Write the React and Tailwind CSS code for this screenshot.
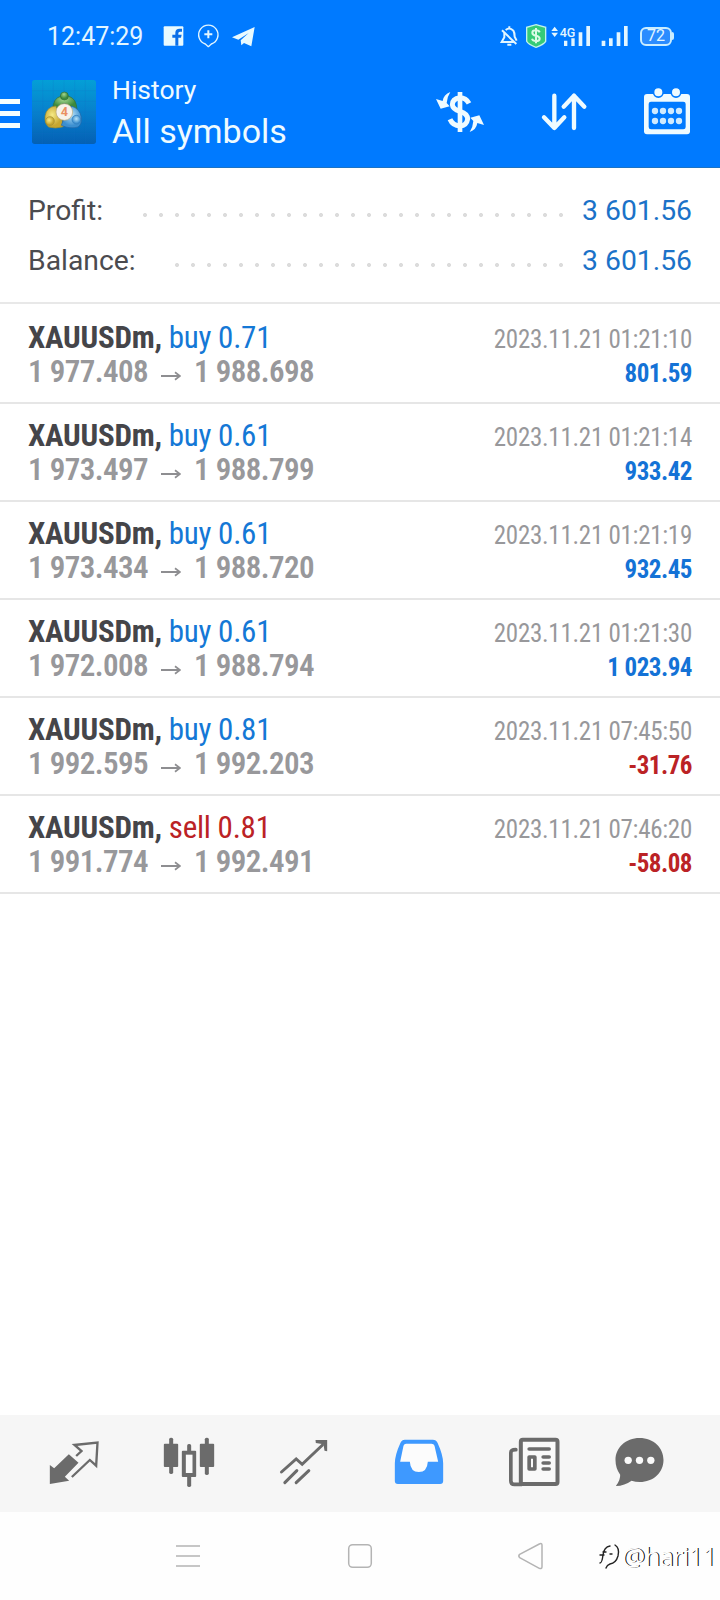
const DEALS = [
  { side: 'buy', volume: '0.71', open: '1 977.408', close: '1 988.698', time: '2023.11.21 01:21:10', profit: '801.59' },
  { side: 'buy', volume: '0.61', open: '1 973.497', close: '1 988.799', time: '2023.11.21 01:21:14', profit: '933.42' },
  { side: 'buy', volume: '0.61', open: '1 973.434', close: '1 988.720', time: '2023.11.21 01:21:19', profit: '932.45' },
  { side: 'buy', volume: '0.61', open: '1 972.008', close: '1 988.794', time: '2023.11.21 01:21:30', profit: '1 023.94' },
  { side: 'buy', volume: '0.81', open: '1 992.595', close: '1 992.203', time: '2023.11.21 07:45:50', profit: '-31.76' },
  { side: 'sell', volume: '0.81', open: '1 991.774', close: '1 992.491', time: '2023.11.21 07:46:20', profit: '-58.08' },
]

function StatusBar() {
  return (
    <div className="flex h-[72px] items-center pl-[47px] pr-[46px] text-[#e3f6ff]">
      <span className="w-[111px] pt-0.5 text-[25px] leading-8">12:47:29</span>
      <div className="flex gap-1">
        <svg viewBox="474 60 90 96" className="h-8 w-[30px]">
          <rect x="491" y="79" width="59" height="58" rx="3" fill="#e8faff" />
          <path d="M526 137V113H517V104H526V98Q526 86 539 86H546V95H540Q535 95 535 100V104H545L543 113H535V137Z" fill="#0a6fe8" />
        </svg>
        <svg viewBox="576 60 96 96" className="h-8 w-8" fill="none" stroke="currentColor" strokeWidth="4">
          <path d="M616 132A29 29 0 1 1 634 132L625 140Z" strokeLinejoin="round" />
          <path d="M625 91V115M613 103H637" strokeWidth="6" />
        </svg>
        <svg viewBox="684 60 96 96" className="h-8 w-8" fill="#e8faff">
          <path d="M696 112L764 81L754 139L732 129L724 136L722 121L746 99L715 119Z" />
        </svg>
      </div>

      <div className="ml-auto flex items-center">
        <svg viewBox="294 60 66 96" className="h-8 w-[22px]" fill="none" stroke="currentColor" strokeWidth="6">
          <path d="M317 90Q329 80 340 92Q344 98 344 110L350 122M313 98V112L305 126H342M322 134H334M328 79V84" />
          <path d="M306 91L349 132" />
        </svg>
        <svg viewBox="372 60 72 96" className="ml-1 h-8 w-6">
          <path d="M408 74L437 82V124Q432 133 408 142Q384 133 380 124V82Z" fill="#35cb78" stroke="#bff3ec" strokeWidth="4" />
          <path d="M419 97Q417 91 408 91Q397 91 397 98Q397 105 408 107Q419 109 419 116Q419 123 408 123Q398 123 396 116M408 84V130" fill="none" stroke="#d9fbe6" strokeWidth="6" />
        </svg>
        <svg viewBox="450 60 126 96" className="ml-0.5 h-8 w-[42px]" fill="currentColor">
          <path d="M454 93L464 80L474 93ZM454 98L464 111L474 98Z" />
          <text x="479" y="111" fontSize="40" fontWeight="500" textLength="47" lengthAdjust="spacingAndGlyphs">4G</text>
          <path d="M492 122H502V138H492ZM514 115H524V138H514ZM536 97H547V138H536ZM559 78H570V138H559Z" />
        </svg>
        <svg viewBox="600 60 90 96" className="ml-2 h-8 w-[30px]" fill="currentColor">
          <path d="M605 122H616V138H605ZM627 115H638V138H627ZM650 97H661V138H650ZM672 78H683V138H672Z" />
        </svg>
        <div className="ml-[10px] flex items-center">
          <div className="flex h-[19px] w-8 items-center justify-center rounded-[6px] border-2 border-[#c9edff] bg-[#2a8cff] text-[16px] leading-none">72</div>
          <div className="h-2 w-0.5 rounded-r bg-[#c9edff]" />
        </div>
      </div>
    </div>
  )
}

function AppLogo() {
  return (
    <svg viewBox="96 240 192 192" className="ml-3 h-16 w-16">
      <defs>
        <linearGradient id="tile" x1="0" y1="0" x2="0" y2="1">
          <stop offset="0" stopColor="#049fd6" />
          <stop offset="0.5" stopColor="#0780cc" />
          <stop offset="1" stopColor="#0460b4" />
        </linearGradient>
        <radialGradient id="green" cx="0.45" cy="0.3">
          <stop offset="0" stopColor="#a4d68e" />
          <stop offset="1" stopColor="#3d8a3c" />
        </radialGradient>
        <radialGradient id="gold" cx="0.4" cy="0.4">
          <stop offset="0" stopColor="#f6ea86" />
          <stop offset="1" stopColor="#c6a630" />
        </radialGradient>
        <radialGradient id="sky" cx="0.5" cy="0.4">
          <stop offset="0" stopColor="#b6e2f8" />
          <stop offset="1" stopColor="#3c8fd0" />
        </radialGradient>
      </defs>
      <rect x="96" y="240" width="192" height="192" rx="8" fill="url(#tile)" />
      <path d="M96 272H288M96 304H288M96 336H288M96 368H288M96 400H288M128 240V432M160 240V432M192 240V432M224 240V432M256 240V432" stroke="#1b6fc0" strokeOpacity="0.25" strokeWidth="2" />
      <g strokeWidth="2">
        <path d="M158 328Q160 294 182 289Q193 284 207 289Q229 296 231 328L212 326Q193 296 176 324Z" fill="url(#green)" stroke="#2f6e3a" />
        <circle cx="193" cy="288" r="12" fill="url(#green)" stroke="#2f6e3a" />
        <path d="M168 318Q140 320 135 348Q133 372 146 381Q165 388 190 380L186 358Q168 350 172 332Z" fill="url(#gold)" stroke="#8d8838" />
        <circle cx="150" cy="363" r="13" fill="url(#gold)" stroke="#a08c30" />
        <path d="M214 318Q240 326 244 352Q246 374 234 381Q210 388 184 376L190 360Q214 356 212 336Z" fill="url(#sky)" stroke="#2466a6" />
        <circle cx="229" cy="359" r="13" fill="url(#sky)" stroke="#2f7cbc" />
        <circle cx="193" cy="336" r="25" fill="#f7f2ea" stroke="#b9a878" />
      </g>
      <text x="193" y="349" textAnchor="middle" fontSize="38" fontWeight="700" fill="#ea8f62">4</text>
    </svg>
  )
}

function Header() {
  return (
    <div className="flex h-[95px] items-start pt-2 pr-6 text-[#effbff]">
      <svg viewBox="0 240 60 192" className="h-16 w-5" fill="#f4ffff">
        <path d="M0 297H60V312H0ZM0 333H60V348H0ZM0 369H60V384H0Z" />
      </svg>
      <AppLogo />
      <div className="-mt-1.5 ml-4 flex-1">
        <div className="text-[26.5px] leading-8">History</div>
        <div className="mt-[5px] text-[34px] leading-10">All symbols</div>
      </div>
      <svg viewBox="90 240 180 192" className="h-16 w-15">
        <path d="M207 310Q198 293 180 293Q157 296 157 314Q158 328 180 334Q203 341 203 357Q200 377 180 378Q158 377 150 358" fill="none" stroke="currentColor" strokeWidth="15" />
        <path d="M180 276V396" stroke="currentColor" strokeWidth="14" />
        <path id="turn" d="M151 276Q131 283 128 303L108 297L122 326L149 319L140 309Q141 291 151 276Z" fill="currentColor" />
        <use href="#turn" transform="rotate(180 180 336)" />
      </svg>
      <svg viewBox="402 240 180 192" className="ml-11 h-16 w-15" fill="none" stroke="currentColor" strokeWidth="13" strokeLinecap="round" strokeLinejoin="round">
        <path d="M463 287V384M432 352L463 384L493 352" />
        <path d="M522 384V287M491 320L522 287L553 320" />
      </svg>
      <svg viewBox="708 240 180 192" className="ml-[42px] h-16 w-15">
        <rect x="732" y="282" width="138" height="121" rx="9" fill="currentColor" />
        <rect x="746" y="305" width="111" height="83" rx="7" fill="#007aff" />
        <g fill="currentColor" stroke="#007aff" strokeWidth="5">
          <circle cx="775" cy="277" r="14.5" />
          <circle cx="828" cy="277" r="14.5" />
        </g>
        <g fill="#cfeaff">
          {[765, 789, 813, 837].map(x => (
            <g key={x}>
              <circle cx={x} cy="333" r="9.5" />
              <circle cx={x} cy="363" r="9.5" />
            </g>
          ))}
        </g>
      </svg>
    </div>
  )
}

function SummaryRow({ label, value, dots }) {
  return (
    <div className="flex h-[50px] items-center text-[28.3px] leading-[50px]">
      <span className="text-[#4b4b4f]">{label}</span>
      <span className={`${dots} relative top-1 mr-[13px] ml-auto h-4 bg-[radial-gradient(circle,#dcdcdc_1.7px,transparent_2.3px)] bg-size-[16px_16px]`} />
      <span className="text-[#1b72c8]">{value}</span>
    </div>
  )
}

function DealRow({ deal }) {
  const sideColor = deal.side === 'buy' ? 'text-[#1478d6]' : 'text-[#bb2225]'
  const profitColor = deal.profit.startsWith('-') ? 'text-[#bb2225]' : 'text-[#1472d6]'
  return (
    <div className="h-[98px] border-b-2 border-[#e6e6e6] pt-[15px] pr-[28px] pl-7 font-stretch-75%">
      <div className="flex h-[34px] items-baseline justify-between leading-[34px]">
        <div className="text-[31px] tracking-[-0.24px]">
          <span className="font-bold text-[#454549]">XAUUSDm,</span>{' '}
          <span className={sideColor}>{deal.side} {deal.volume}</span>
        </div>
        <div className="text-[25px] tracking-[-0.27px] text-[#98989b]">{deal.time}</div>
      </div>
      <div className="flex h-[34px] items-baseline justify-between leading-[34px]">
        <div className="flex items-baseline text-[31px] font-semibold tracking-[-0.55px] text-[#98989b]">
          <span className="w-[133px]">{deal.open}</span>
          <svg viewBox="0 0 20 10" className="h-[10px] w-5 translate-y-[-1px]" fill="none" stroke="#8e8e91" strokeWidth="1.8">
            <path d="M0 5H18.5M14 1.2L19 5L14 8.8" />
          </svg>
          <span className="ml-[13px]">{deal.close}</span>
        </div>
        <div className={`text-[25px] font-bold tracking-[-0.5px] ${profitColor}`}>{deal.profit}</div>
      </div>
    </div>
  )
}

function TabBar() {
  return (
    <div className="flex h-[97px] items-center gap-[55px] bg-[#f6f6f6] pb-[1px] pl-[43.5px] text-[#6b6b6b]">
      <svg viewBox="130.5 99 180 180" className="size-15 shrink-0">
        <path d="M148 195L161 205L205 163L234 188L193 230L206 242L148 252Z" fill="currentColor" />
        <path d="M227 168L243 153L222 135L291 128L287 197L268 180L214 231" fill="none" stroke="currentColor" strokeWidth="7" />
      </svg>
      <svg viewBox="475.5 99 180 180" className="size-15 shrink-0" fill="currentColor">
        <rect x="506" y="113" width="12" height="109" rx="5" />
        <rect x="490" y="131" width="43" height="70" rx="3" />
        <rect x="560" y="132" width="12" height="129" rx="5" />
        <rect x="544" y="152" width="43" height="79" rx="3" />
        <rect x="556" y="164" width="20" height="55" fill="#f9f9f9" />
        <rect x="613" y="113" width="12" height="112" rx="5" />
        <rect x="598" y="131" width="43" height="70" rx="3" />
      </svg>
      <svg viewBox="820.5 99 180 180" className="size-15 shrink-0" fill="none" stroke="currentColor" strokeWidth="9" strokeLinecap="round">
        <path d="M843 216L887 177L905 193L966 135" />
        <path d="M853 248L889 212M887 248L925 212" />
        <path d="M945 120H980V154L972 152L969 133L946 129Z" fill="currentColor" stroke="none" />
      </svg>
      <svg viewBox="85.5 99 180 180" className="size-15 shrink-0">
        <path d="M133 119H217Q227 119 231 128Q248 165 248 190V243Q248 252 239 252H112Q103 252 103 243V190Q103 165 120 128Q124 119 133 119Z" fill="#3e99ff" />
        <path d="M137 131H213Q220 131 222 137L233 185H202Q200 216 175 216Q150 216 148 185H119L129 137Q131 131 137 131Z" fill="#fcfcfc" />
      </svg>
      <svg viewBox="430.5 99 180 180" className="size-15 shrink-0" fill="none" stroke="currentColor" strokeWidth="11" strokeLinecap="round">
        <rect x="481" y="119" width="110" height="133" rx="6" fill="#f9f9f9" strokeWidth="12" />
        <path d="M466 149Q451 149 451 158V242Q451 253 462 253H484" />
        <path d="M506 147H566M548 171H566M548 189H566M548 207H566" />
        <rect x="506" y="171" width="17" height="36" strokeLinejoin="round" />
      </svg>
      <svg viewBox="748.5 99 180 180" className="-ml-[9px] size-15 shrink-0">
        <path d="M837 114C880 114 909 144 909 180C909 218 878 246 838 246Q825 246 813 242Q793 257 766 258Q780 240 779 224Q765 205 765 180C765 144 795 114 837 114Z" fill="currentColor" />
        <g fill="#fafafa">
          <circle cx="803" cy="181" r="11" />
          <circle cx="837" cy="181" r="11" />
          <circle cx="871" cy="181" r="11" />
        </g>
      </svg>
    </div>
  )
}

function SystemNav() {
  return (
    <div className="relative flex h-[88px] items-center bg-[#fefefe] pl-[172px]">
      <svg viewBox="516 420 96 96" className="size-8" stroke="#b4b4b4" strokeWidth="4">
        <path d="M528 438H600M528 468H600M528 498H600" />
      </svg>
      <svg viewBox="0 0 32 32" className="ml-[140px] size-8" fill="none" stroke="#b4b4b4" strokeWidth="1.5">
        <rect x="4.7" y="4.7" width="22.6" height="22.6" rx="4" />
      </svg>
      <svg viewBox="462 420 96 96" className="ml-[138px] size-8" fill="none" stroke="#b4b4b4" strokeWidth="4.5" strokeLinejoin="round">
        <path d="M479 463Q474 468 479 473L538 505Q546 508 546 500V436Q546 428 538 432Z" />
      </svg>
      <div className="absolute top-7 left-[598px] flex items-center">
        <svg viewBox="0 0 24 32" className="h-8 w-6" fill="none" stroke="#222" strokeWidth="1.4" strokeLinecap="round">
          <path d="M2 15H6M2 23Q4 23 5 15Q6 7 12 6M5 12H8" />
          <path d="M12 14H14M17 5Q22 8 20 16Q18 23 12 24Q9 25 8 28" />
        </svg>
        <span className="font-['Open_Sans',sans-serif] text-[26px] leading-8 tracking-[-0.9px] text-white text-shadow-[1px_-0.5px_0_#000]">@hari11</span>
      </div>
    </div>
  )
}

export default function App() {
  return (
    <div className="flex h-[1600px] w-[720px] flex-col overflow-hidden bg-white font-['Roboto',sans-serif]">
      <div className="h-[168px] border-b border-[#1c73c4] bg-[#007aff]">
        <StatusBar />
        <Header />
      </div>
      <div className="h-[136px] border-b-2 border-[#e8e8e8] pt-[18px] pr-[28px] pl-7">
        <SummaryRow label="Profit:" value="3 601.56" dots="w-[432px]" />
        <SummaryRow label="Balance:" value="3 601.56" dots="w-[400px]" />
      </div>
      <div className="flex-1 pt-0.5">
        {DEALS.map(deal => <DealRow key={deal.time} deal={deal} />)}
      </div>
      <TabBar />
      <SystemNav />
    </div>
  )
}
